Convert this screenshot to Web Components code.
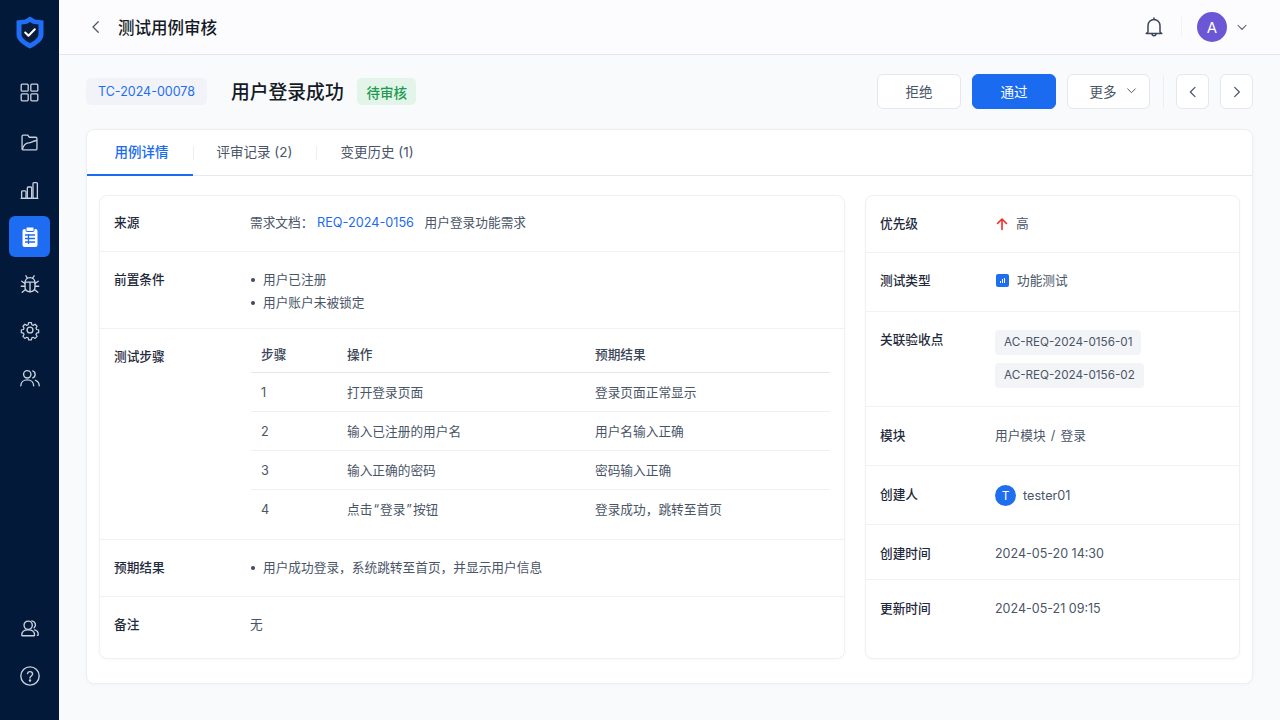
<!DOCTYPE html>
<html lang="zh-CN">
<head>
<meta charset="utf-8">
<title>测试用例审核</title>
<style>
html, body { margin: 0; height: 100%; }
body {
    font-family: Inter, "Noto Sans CJK SC", sans-serif;
    font-size: 12.7px;
    color: #1f2a3d;
    background: #f9fafc;
    overflow: hidden;
}
</style>
</head>
<body>
<review-app></review-app>
<script>
const ICONS = {
    grid: '<rect x="2.500" y="2.500" width="8" height="8" rx="1.200"/><rect x="13.500" y="2.500" width="8" height="8" rx="1.200"/><rect x="2.500" y="13.500" width="8" height="8" rx="1.200"/><rect x="13.500" y="13.500" width="8" height="8" rx="1.200"/>',
    folder: '<path d="M3.500 19V5c0-.8.6-1.500 1.400-1.500H10l1.800 2.500h7.300c.8 0 1.400.6 1.400 1.400V19c0 .8-.6 1.500-1.400 1.500H4.900c-.8 0-1.400-.7-1.400-1.500z"/><path d="M4 19.500c1.500-5 3.800-6.800 7-7 3.500-.2 4.500-2.300 9-2.800"/>',
    chart: '<path d="M2.500 21h19"/><rect x="3" y="12.500" width="5" height="8.500" rx="1"/><rect x="9.500" y="8" width="5" height="13" rx="1"/><rect x="16" y="3" width="5" height="18" rx="1"/>',
    bug: '<path d="M6.500 11c0-3.500 2.200-6 5.500-6s5.500 2.500 5.500 6v4c0 3.200-2.200 5.500-5.500 5.500S6.500 18.200 6.500 15z"/><path d="M6.800 10h10.400M12 10v10.500M9 5.500 7.500 3M15 5.500 16.500 3M6.500 11.500 3 9M17.500 11.500 21 9M6.500 14.500H2.500M17.500 14.500h4M7.200 18 3.500 21M16.800 18l3.700 3"/>',
    gear: '<circle cx="12" cy="12" r="3.200"/><path d="M10.300 3h3.400l.5 2.600 1.700.8 2.300-1.400 2.400 2.400-1.400 2.300.7 1.700 2.600.5v3.400l-2.600.5-.7 1.700 1.400 2.300-2.400 2.400-2.300-1.400-1.700.7-.5 2.600h-3.400l-.5-2.600-1.700-.7-2.300 1.400-2.400-2.400 1.400-2.300-.7-1.700-2.600-.5v-3.400l2.600-.5.700-1.700-1.400-2.300 2.400-2.400 2.300 1.400 1.700-.8z" transform="translate(1.200 1.200) scale(.9)"/>',
    users: '<circle cx="9" cy="8" r="4"/><path d="M2 20.500c0-4 3-6.500 7-6.500s7 2.500 7 6.500"/><path d="M15 4.300a4 4 0 0 1 0 7.500M18 14.500c2.500.8 4 3 4 6"/>',
    team: '<circle cx="10" cy="9" r="4.500"/><path d="M14 4.200a4.300 4.300 0 0 1 2.500 7.500M3 19.500c0-3.500 2.500-5.500 7-5.500s7 2 7 5.500c0 .8-.5 1-1 1H4c-.5 0-1-.2-1-1zM17 14c2.500.5 4 2.500 4 5 0 .8-.5 1-1 1"/>',
    help: '<circle cx="12" cy="12" r="10"/><path d="M9.300 9.300A2.800 2.800 0 0 1 12 7.200c1.600 0 2.800 1.100 2.800 2.500 0 2.300-2.800 2.300-2.800 4.500"/><circle cx="12" cy="17" r=".6" fill="currentColor"/>',
    bell: '<path d="M6 17V10.500a6 6 0 0 1 12 0V17l1.800 1.500H4.200z"/><path d="M12 4.500V3M10 18.500c0 1.300.9 2.300 2 2.300s2-1 2-2.300"/>',
    left: '<path d="M15 5l-7 7 7 7"/>',
    right: '<path d="M8.500 5l7 7-7 7"/>',
    down: '<path d="M5 9l7 7 7-7"/>'
};

function icon(name, size, width = 1.6){
    return `<svg width="${size}" height="${size}" viewBox="0 0 24 24" fill="none" stroke="currentColor" stroke-width="${width}" stroke-linecap="round" stroke-linejoin="round">${ICONS[name]}</svg>`;
}

class BaseElement extends HTMLElement {
    constructor(){
        super();
        let template = document.createElement('template');
        template.innerHTML = `<style>${this.getStyle()}</style>${this.getTemplate()}`;
        this.attachShadow({mode: 'open'}).appendChild(template.content.cloneNode(true));
    }
    getStyle(){ return '' }
    getTemplate(){ return '<slot></slot>' }
}

class SideNav extends BaseElement {
    getStyle(){
        return `
        :host { display: flex; flex-direction: column; align-items: center; width: 59px; flex: none; background: #03193a; color: #c9d1dd; }
        .logo { height: 64px; display: flex; align-items: center; justify-content: center; margin-bottom: 8px; }
        .item { width: 41px; height: 41px; border-radius: 6px; display: flex; align-items: center; justify-content: center; margin-bottom: 7px; }
        .item.active { background: #1d6cf2; color: #fff; margin-bottom: 6px; }
        .bottom { margin-top: auto; padding-bottom: 17px; }
        svg { display: block; }
        `
    }
    getTemplate(){
        return `
        <div class="logo">
            <svg width="30" height="33" viewBox="0 0 30 33">
                <path d="M15 .5 20 3.500l8.500 1v14c0 6-6.500 10.500-13.500 14C8 29 1.500 24.500 1.500 18.500v-14l8.500-1z" fill="#1f6ef5"/>
                <path d="M15 6l3 1.800 5.500.7v9.500c0 3.800-4 6.800-8.500 9-4.500-2.200-8.500-5.200-8.500-9V8.500l5.500-.7z" fill="#0a1c3e"/>
                <path d="M10.200 16.500l3.300 3.200 6.300-6.400" fill="none" stroke="#fff" stroke-width="2" stroke-linecap="round" stroke-linejoin="round"/>
            </svg>
        </div>
        <div class="item" style="margin-bottom:9px">${icon('grid', 21, 1.5)}</div>
        <div class="item">${icon('folder', 21, 1.5)}</div>
        <div class="item" style="margin-bottom:5px">${icon('chart', 21, 1.5)}</div>
        <div class="item active">
            <svg width="20" height="22" viewBox="0 0 20 22">
                <rect x="2.500" y="3" width="15" height="18" rx="2" fill="#fff"/>
                <rect x="6" y="1" width="8" height="4.500" rx="1" fill="#fff" stroke="#1d6cf2" stroke-width="1"/>
                <path d="M5 9h10M5 12.500h10M5 16h10M8.500 8v10" stroke="#1d6cf2" stroke-width="1.300" fill="none"/>
            </svg>
        </div>
        <div class="item" style="margin-bottom:5px">${icon('bug', 22, 1.5)}</div>
        <div class="item">${icon('gear', 22, 1.5)}</div>
        <div class="item">${icon('users', 22, 1.5)}</div>
        <div class="bottom">
            <div class="item">${icon('team', 22, 1.5)}</div>
            <div class="item">${icon('help', 22, 1.5)}</div>
        </div>
        `
    }
}

class TopBar extends BaseElement {
    getStyle(){
        return `
        :host { display: flex; align-items: center; height: 54px; flex: none; background: #fcfcfe; border-bottom: 1px solid #e3e6ec; padding: 0 31px 0 28px; }
        .back { color: #4a5567; display: flex; margin-right: 13px; }
        h1 { font-size: 16.500px; font-weight: 500; margin: 0; color: #141a26; flex: 1; }
        .bell { color: #3c4657; display: flex; padding-right: 15px; border-right: 1px solid #f1f2f5; height: 20px; align-items: center; margin-right: 15px; }
        .avatar { width: 30px; height: 30px; border-radius: 50%; background: #6b57d6; color: #fff; font-size: 15px; display: flex; align-items: center; justify-content: center; margin-right: 8px; }
        .caret { color: #4a5567; display: flex; }
        `
    }
    getTemplate(){
        return `
        <span class="back">${icon('left', 18, 1.6)}</span>
        <h1>测试用例审核</h1>
        <span class="bell">${icon('bell', 24, 1.5)}</span>
        <span class="avatar">A</span>
        <span class="caret">${icon('down', 14, 1.8)}</span>
        `
    }
}

class UiButton extends BaseElement {
    getStyle(){
        return `
        :host { display: inline-flex; align-items: center; justify-content: center; gap: 6px; box-sizing: border-box; height: 35px; padding-bottom: 2px; background: #fff; border: 1px solid #e4e7ed; border-radius: 6px; color: #4a5567; font-size: 13.500px; }
        :host([primary]) { background: #1a6bf0; border-color: #1a6bf0; color: #fff; }
        `
    }
}

class ReviewHeader extends BaseElement {
    getStyle(){
        return `
        :host { display: flex; align-items: center; height: 35px; margin-bottom: 20px; }
        .code { height: 27px; width: 121px; box-sizing: border-box; display: flex; align-items: center; justify-content: center; background: #f1f3f8; border-radius: 5px; color: #1f6ef0; font-size: 12.500px; margin-right: 24px; }
        h2 { font-size: 18.800px; font-weight: 500; margin: 0 13px 0 0; padding-bottom: 2px; color: #141a26; }
        .status { height: 27px; width: 59px; box-sizing: border-box; padding-left: 1px; display: flex; align-items: center; justify-content: center; background: #e2f5e8; border-radius: 5px; color: #1f9a50; font-size: 13.500px; font-weight: 500; }
        .actions { margin-left: auto; display: flex; align-items: center; }
        ui-button { margin-right: 11px; }
        .sep { width: 1px; height: 33px; background: #eceef2; margin: 0 12px 0 2px; }
        `
    }
    getTemplate(){
        return `
        <span class="code">TC-2024-00078</span>
        <h2>用户登录成功</h2>
        <span class="status">待审核</span>
        <div class="actions">
            <ui-button style="width:84px">拒绝</ui-button>
            <ui-button style="width:84px" primary>通过</ui-button>
            <ui-button style="width:83px;gap:8px;padding-left:10px">更多${icon('down', 13, 1.8)}</ui-button>
            <span class="sep"></span>
            <ui-button style="width:33px;padding-bottom:0">${icon('left', 16, 1.8)}</ui-button>
            <ui-button style="width:33px;padding-bottom:0;margin-right:0">${icon('right', 16, 1.8)}</ui-button>
        </div>
        `
    }
}

class TabBar extends BaseElement {
    getStyle(){
        return `
        :host { display: flex; height: 46px; box-sizing: border-box; border-bottom: 1px solid #e6e9ef; font-size: 13.500px; color: #4a5567; }
        .tab { position: relative; display: flex; align-items: center; justify-content: center; box-sizing: border-box; height: 45px; padding-bottom: 3px; }
        .tab.active { color: #1a6bf0; font-weight: 500; padding-left: 3px; }
        .tab.active::after { content: ""; position: absolute; left: 0; right: 0; bottom: -1px; height: 2px; background: #1a6bf0; }
        .bar { width: 1px; height: 14px; background: #eceef2; align-self: center; }
        `
    }
    getTemplate(){
        return `
        <span class="tab active" style="width:106px">用例详情</span><span class="bar"></span>
        <span class="tab" style="width:122px;padding-right:1px">评审记录 (2)</span><span class="bar"></span>
        <span class="tab" style="width:120px">变更历史 (1)</span>
        `
    }
}

class InfoPanel extends BaseElement {
    getStyle(){
        return `
        :host { display: flex; flex-direction: column; box-sizing: border-box; background: #fff; border: 1px solid #eef0f4; border-radius: 8px; box-shadow: 0 1px 3px rgba(20,30,60,.03); }
        `
    }
}

class InfoRow extends BaseElement {
    static get observedAttributes(){ return ['label'] }
    attributeChangedCallback(attrName, oldVal, newVal){
        this.shadowRoot.querySelector('.label').textContent = newVal;
    }
    getStyle(){
        return `
        :host { display: flex; box-sizing: border-box; border-bottom: 1px solid #f0f2f5; padding: 18px 14px 0; color: #4a5567; line-height: 19px; }
        :host(:last-child) { border-bottom: 0; }
        .label { flex: none; width: var(--label-width, 136px); padding-top: var(--label-top, 0); font-weight: 500; color: #1f2a3d; }
        .value { flex: 1; min-width: 0; }
        `
    }
    getTemplate(){
        return `<span class="label"></span><div class="value"><slot></slot></div>`
    }
}

class BulletList extends BaseElement {
    getStyle(){
        return `
        :host { display: block; }
        ::slotted(div) { position: relative; padding-left: 13px; margin-bottom: 4px; }
        `
    }
}

class StepsTable extends BaseElement {
    getStyle(){
        return `
        :host { display: block; }
        table { border-collapse: collapse; width: 579px; table-layout: fixed; color: #4a5567; }
        th { text-align: left; font-weight: 500; height: 35px; padding: 0 0 0 10px; color: #3a4557; border-bottom: 1px solid #e3e6ec; }
        td { height: 38px; padding: 0 0 0 10px; border-bottom: 1px solid #eef0f4; }
        tr:last-child td { border-bottom: 0; }
        .q { letter-spacing: 1px; margin-left: 1px; }
        `
    }
    getTemplate(){
        let steps = [
            ['1', '打开登录页面', '登录页面正常显示'],
            ['2', '输入已注册的用户名', '用户名输入正确'],
            ['3', '输入正确的密码', '密码输入正确'],
            ['4', '点击<span class="q">“</span>登录<span class="q">”</span>按钮', '登录成功，跳转至首页']
        ];
        return `
        <table>
            <colgroup><col style="width:86px"><col style="width:248px"><col></colgroup>
            <tr><th>步骤</th><th>操作</th><th>预期结果</th></tr>
            ${steps.map(s => `<tr><td>${s[0]}</td><td>${s[1]}</td><td>${s[2]}</td></tr>`).join('')}
        </table>
        `
    }
}

class ReviewApp extends BaseElement {
    getStyle(){
        return `
        :host { display: flex; height: 720px; }
        .main { flex: 1; min-width: 0; display: flex; flex-direction: column; }
        .content { padding: 19px 27px 0; }
        .card { height: 555px; box-sizing: border-box; background: #fff; border: 1px solid #eceef3; border-radius: 8px; box-shadow: 0 1px 4px rgba(20,30,60,.03); }
        .panels { display: flex; gap: 20px; padding: 19px 12px 0; }
        .left { width: 746px; height: 464px; }
        .right { width: 375px; height: 464px; --label-width: 115px; }
        .lower { padding-top: 19px; }
        .link { color: #1a6bf0; margin-right: 7px; }
        .dot::before { content: ""; position: absolute; left: 1px; top: 8px; width: 4px; height: 4px; border-radius: 50%; background: #3f4a5c; }
        .inline { display: flex; align-items: center; gap: 8px; }
        .type { width: 13px; height: 13px; margin-left: 1px; border-radius: 2px; background: #1f6ef0; display: flex; align-items: center; justify-content: center; }
        .tag { display: table; height: 25px; line-height: 25px; padding: 0 9px; background: #f2f4f7; border-radius: 4px; font-size: 11.700px; margin-bottom: 8px; }
        .who { width: 21px; height: 21px; border-radius: 50%; background: #1f6ef0; color: #fff; font-size: 12px; display: flex; align-items: center; justify-content: center; }
        .num { font-size: 12.500px; }
        `
    }
    getTemplate(){
        return `
        <side-nav></side-nav>
        <div class="main">
            <top-bar></top-bar>
            <div class="content">
                <review-header></review-header>
                <div class="card">
                    <tab-bar></tab-bar>
                    <div class="panels">
                        <info-panel class="left">
                            <info-row label="来源" style="height:56px;padding-top:17px">需求文档： <span class="link">REQ-2024-0156</span> 用户登录功能需求</info-row>
                            <info-row label="前置条件" style="height:77px">
                                <bullet-list><div class="dot">用户已注册</div><div class="dot">用户账户未被锁定</div></bullet-list>
                            </info-row>
                            <info-row label="测试步骤" style="height:211px;padding-top:8px;--label-top:10px"><steps-table style="margin-left:1px"></steps-table></info-row>
                            <info-row label="预期结果" style="height:57px"><bullet-list><div class="dot">用户成功登录，系统跳转至首页，并显示用户信息</div></bullet-list></info-row>
                            <info-row label="备注">无</info-row>
                        </info-panel>
                        <info-panel class="right">
                            <info-row label="优先级" style="height:57px"><div class="inline">
                                <svg width="14" height="14" viewBox="0 0 14 14" fill="none" stroke="#f02b2b" stroke-width="1.600" stroke-linecap="round" stroke-linejoin="round" style="margin-right:-1px"><path d="M7 12.500V2M2.500 6.500 7 2l4.500 4.500"/></svg>高</div></info-row>
                            <info-row label="测试类型" style="height:59px"><div class="inline"><span class="type"><svg width="7" height="7" viewBox="0 0 7 7"><path d="M1 6h1V4H1zM3 6h1V2H3zM5 6h1V1H5z" fill="#fff"/></svg></span>功能测试</div></info-row>
                            <info-row class="lower" label="关联验收点" style="height:95px;--label-top:0;padding-top:18px"><span class="tag">AC-REQ-2024-0156-01</span><span class="tag">AC-REQ-2024-0156-02</span></info-row>
                            <info-row class="lower" label="模块" style="height:59px"><span style="word-spacing:1.500px">用户模块 / 登录</span></info-row>
                            <info-row class="lower" label="创建人" style="height:59px"><div class="inline" style="gap:7px"><span class="who">T</span>tester01</div></info-row>
                            <info-row class="lower" label="创建时间" style="height:55px"><span class="num">2024-05-20 14:30</span></info-row>
                            <info-row class="lower" label="更新时间"><span class="num">2024-05-21 09:15</span></info-row>
                        </info-panel>
                    </div>
                </div>
            </div>
        </div>
        `
    }
}

window.customElements.define('side-nav', SideNav);
window.customElements.define('top-bar', TopBar);
window.customElements.define('ui-button', UiButton);
window.customElements.define('review-header', ReviewHeader);
window.customElements.define('tab-bar', TabBar);
window.customElements.define('info-panel', InfoPanel);
window.customElements.define('info-row', InfoRow);
window.customElements.define('bullet-list', BulletList);
window.customElements.define('steps-table', StepsTable);
window.customElements.define('review-app', ReviewApp);
</script>
</body>
</html>
